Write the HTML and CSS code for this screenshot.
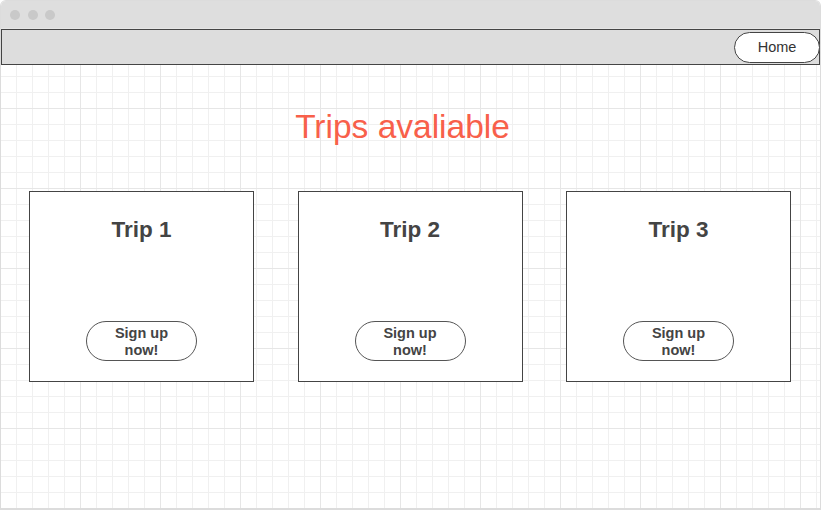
FILE: index.html
```html
<!DOCTYPE html>
<html lang="en">
<head>
<meta charset="utf-8">
<title>Trips</title>
<link rel="stylesheet" href="styles.css">
</head>
<body>
<div class="window">
  <div class="titlebar">
    <span class="dot"></span>
    <span class="dot"></span>
    <span class="dot"></span>
  </div>
  <div class="content">
    <nav class="nav">
      <button class="home-btn">Home</button>
    </nav>
    <h1 class="page-title">Trips avaliable</h1>
    <div class="cards">
      <div class="card">
        <h2 class="card-title">Trip 1</h2>
        <button class="signup-btn">Sign up now!</button>
      </div>
      <div class="card">
        <h2 class="card-title">Trip 2</h2>
        <button class="signup-btn">Sign up now!</button>
      </div>
      <div class="card">
        <h2 class="card-title">Trip 3</h2>
        <button class="signup-btn">Sign up now!</button>
      </div>
    </div>
  </div>
</div>
</body>
</html>
```
FILE: styles.css
```css
* { box-sizing: border-box; }

html, body {
  margin: 0;
  padding: 0;
  background: #fff;
  font-family: "Liberation Sans", Arial, sans-serif;
}

.window {
  width: 821px;
  height: 510px;
  border: 1px solid #dcdcdc;
  border-bottom-width: 2px;
  border-radius: 6px 6px 0 0;
  overflow: hidden;
  display: flex;
  flex-direction: column;
}

.titlebar {
  height: 27px;
  flex: none;
  background: #dedede;
  display: flex;
  align-items: center;
  gap: 7.5px;
  padding-left: 9px;
  padding-top: 1px;
}

.dot {
  width: 10px;
  height: 10px;
  border-radius: 50%;
  background: #c9c9c9;
}

.content {
  flex: 1;
  background-color: #fff;
  background-image:
    linear-gradient(to right, #e6e6e6 1px, transparent 1px),
    linear-gradient(to bottom, #e6e6e6 1px, transparent 1px),
    linear-gradient(to right, #f0f0f0 1px, transparent 1px),
    linear-gradient(to bottom, #f0f0f0 1px, transparent 1px);
  background-size: 80px 80px, 80px 80px, 16px 16px, 16px 16px;
  background-position: 79px 0, 0 0, 15px 0, 0 0;
  padding-top: 1px;
}

.nav {
  height: 36px;
  border: 1px solid #444;
  background: #dddddd;
  display: flex;
  justify-content: flex-end;
  align-items: center;
}

.home-btn {
  width: 86px;
  height: 31px;
  margin-right: -1px;
  margin-top: 1px;
  border: 1px solid #444;
  border-radius: 16px;
  background: #fff;
  font-family: "Liberation Sans", Arial, sans-serif;
  font-size: 14.5px;
  color: #333;
  padding: 0 0 1px 0;
}

.page-title {
  margin: 43px 16px 0 0;
  font-size: 33.5px;
  line-height: 38px;
  font-weight: normal;
  color: #f8604a;
  text-align: center;
}

.cards {
  margin-top: 45px;
  padding: 0 29px 0 28px;
  display: flex;
  justify-content: space-between;
}

.card {
  width: 225px;
  height: 191px;
  border: 1px solid #444;
  background: #fff;
  display: flex;
  flex-direction: column;
  align-items: center;
  padding: 25px 0 20px;
}

.card-title {
  margin: 0;
  font-size: 22.5px;
  line-height: 26px;
  font-weight: bold;
  color: #444;
}

.signup-btn {
  margin-top: auto;
  width: 111px;
  height: 40px;
  border: 1px solid #555;
  border-radius: 20px;
  background: #fff;
  padding: 1px 20px 0;
  font-family: "Liberation Sans", Arial, sans-serif;
  font-size: 14.5px;
  line-height: 16.5px;
  font-weight: bold;
  color: #444;
  text-align: center;
}
```
